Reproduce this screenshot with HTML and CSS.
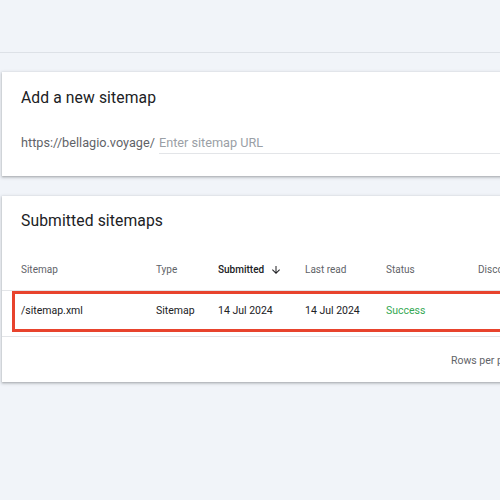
FILE: index.html
```html
<!DOCTYPE html>
<html>
<head>
<meta charset="utf-8">
<link rel="stylesheet" href="styles.css">
</head>
<body>
<div class="topbar"></div>
<main class="content">
  <section class="card add-card">
    <h2 class="card-title">Add a new sitemap</h2>
    <div class="input-row">
      <span class="prefix">https://bellagio.voyage/</span>
      <div class="field"><span class="placeholder">Enter sitemap URL</span></div>
    </div>
  </section>
  <section class="card list-card">
    <h2 class="card-title">Submitted sitemaps</h2>
    <div class="table">
      <div class="row head">
        <div class="c c1">Sitemap</div>
        <div class="c c2">Type</div>
        <div class="c c3 sorted">Submitted <svg class="arrow" viewBox="0 0 24 24" width="12" height="12"><path d="M20 12l-1.41-1.41L13 16.17V4h-2v12.17l-5.58-5.59L4 12l8 8 8-8z" fill="#202124"/></svg></div>
        <div class="c c4">Last read</div>
        <div class="c c5">Status</div>
        <div class="c c6">Discovered pages</div>
      </div>
      <div class="row body">
        <div class="c c1">/sitemap.xml</div>
        <div class="c c2">Sitemap</div>
        <div class="c c3">14 Jul 2024</div>
        <div class="c c4">14 Jul 2024</div>
        <div class="c c5 success">Success</div>
        <div class="c c6"></div>
        <div class="highlight"></div>
      </div>
    </div>
    <div class="footer"><span>Rows per page:</span></div>
  </section>
</main>
</body>
</html>
```
FILE: styles.css
```css
html, body {
  margin: 0;
  padding: 0;
  background: #f1f4f9;
  overflow: hidden;
  width: 500px;
  height: 500px;
  font-family: Roboto, "Liberation Sans", Arial, sans-serif;
  color: #202124;
}
.topbar {
  height: 52px;
  border-bottom: 1px solid #dde1e7;
}
.content {
  padding-top: 19px;
  display: flex;
  flex-direction: column;
  gap: 20px;
}
.card {
  background: #fff;
  margin-left: 2px;
  width: 560px;
  box-shadow: 0 1px 2px rgba(60,64,67,0.3), 0 1px 3px 1px rgba(60,64,67,0.15);
}
.card-title {
  margin: 0;
  font-size: 15.7px;
  font-weight: 400;
  line-height: 20px;
  padding-left: 19px;
  letter-spacing: 0.1px;
}
.add-card {
  height: 104px;
  padding-top: 16px;
  box-sizing: border-box;
}
.input-row {
  display: flex;
  align-items: flex-start;
  margin-top: 26px;
  padding-left: 19px;
  font-size: 12.7px;
  line-height: 18px;
}
.prefix {
  color: #5f6368;
  padding-right: 4px;
}
.field {
  flex: 1;
  border-bottom: 1px solid #e3e5e8;
  padding-bottom: 1px;
}
.placeholder {
  color: #9aa0a6;
}
.list-card {
  padding-top: 15px;
  height: 186px;
  box-sizing: border-box;
}
.table {
  margin-top: 16px;
}
.row {
  display: grid;
  grid-template-columns: 135px 62px 87px 81px 92px 1fr;
  padding-left: 19px;
  position: relative;
  border-bottom: 1px solid #e3e5e8;
}
.head {
  height: 44px;
  padding-top: 2px;
  align-items: center;
  font-size: 10px;
  color: #5f6368;
  box-sizing: border-box;
}
.head .sorted {
  color: #202124;
  font-weight: 500;
  display: flex;
  align-items: center;
  gap: 6px;
}
.arrow { display: block; }
.body {
  height: 46px;
  box-sizing: border-box;
  padding-top: 13px;
  font-size: 10.5px;
  line-height: 14px;
  color: #202124;
}
.c { white-space: nowrap; }
.success { color: #34a853; }
.highlight {
  position: absolute;
  left: 10px;
  right: -6px;
  top: 0;
  height: 41px;
  border: 3px solid #e8432d;
  box-sizing: border-box;
}
.footer {
  height: 44px;
  padding-top: 3px;
  box-sizing: border-box;
  display: flex;
  align-items: center;
  padding-left: 449px;
  font-size: 10.5px;
  color: #5f6368;
}
```
